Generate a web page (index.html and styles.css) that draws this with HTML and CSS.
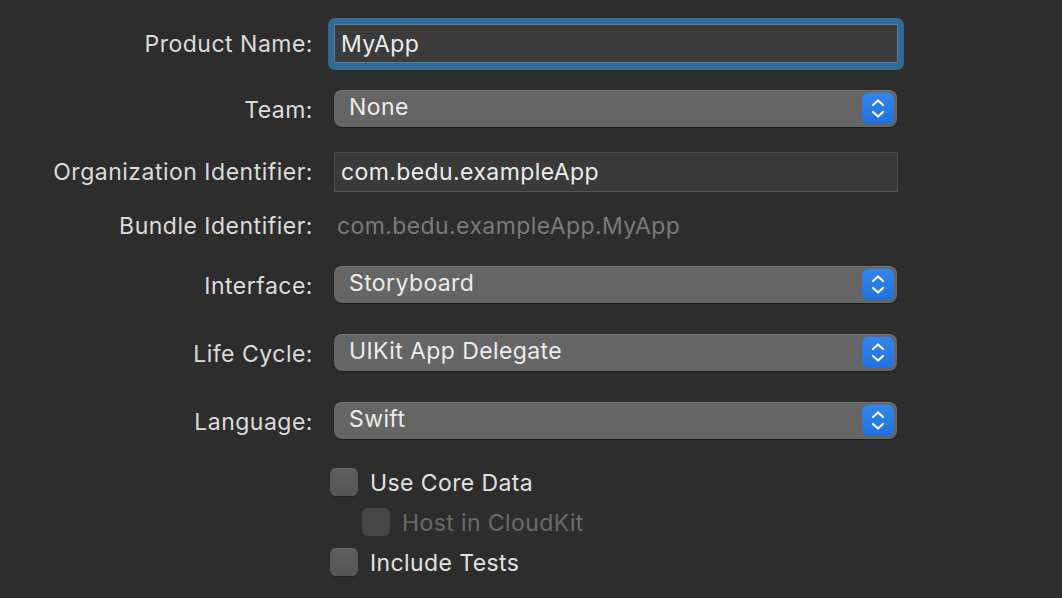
FILE: index.html
```html
<!DOCTYPE html>
<html>
<head>
<meta charset="utf-8">
<link rel="stylesheet" href="styles.css">
</head>
<body>
<div class="form">
  <div class="row r-name">
    <div class="label">Product Name:</div>
    <div class="ctrl"><div class="focus"><div class="field">MyApp</div></div></div>
  </div>
  <div class="row r-team r-pop">
    <div class="label">Team:</div>
    <div class="ctrl"><div class="popup"><span>None</span><span class="stepper"><svg width="32" height="31" viewBox="0 0 32 31"><path d="M11 12 L16 7.5 L21 12 M11 19 L16 23.5 L21 19" fill="none" stroke="#fff" stroke-width="2.2" stroke-linecap="round" stroke-linejoin="round"/></svg></span></div></div>
  </div>
  <div class="row r-org">
    <div class="label">Organization Identifier:</div>
    <div class="ctrl"><div class="field plain">com.bedu.exampleApp</div></div>
  </div>
  <div class="row r-bundle">
    <div class="label">Bundle Identifier:</div>
    <div class="ctrl"><div class="static">com.bedu.exampleApp.MyApp</div></div>
  </div>
  <div class="row r-iface r-pop">
    <div class="label">Interface:</div>
    <div class="ctrl"><div class="popup"><span>Storyboard</span><span class="stepper"><svg width="32" height="31" viewBox="0 0 32 31"><path d="M11 12 L16 7.5 L21 12 M11 19 L16 23.5 L21 19" fill="none" stroke="#fff" stroke-width="2.2" stroke-linecap="round" stroke-linejoin="round"/></svg></span></div></div>
  </div>
  <div class="row r-life r-pop">
    <div class="label">Life Cycle:</div>
    <div class="ctrl"><div class="popup"><span>UIKit App Delegate</span><span class="stepper"><svg width="32" height="31" viewBox="0 0 32 31"><path d="M11 12 L16 7.5 L21 12 M11 19 L16 23.5 L21 19" fill="none" stroke="#fff" stroke-width="2.2" stroke-linecap="round" stroke-linejoin="round"/></svg></span></div></div>
  </div>
  <div class="row r-lang r-pop">
    <div class="label">Language:</div>
    <div class="ctrl"><div class="popup"><span>Swift</span><span class="stepper"><svg width="32" height="31" viewBox="0 0 32 31"><path d="M11 12 L16 7.5 L21 12 M11 19 L16 23.5 L21 19" fill="none" stroke="#fff" stroke-width="2.2" stroke-linecap="round" stroke-linejoin="round"/></svg></span></div></div>
  </div>
  <div class="row r-check r-core">
    <div class="label"></div>
    <div class="ctrl check"><span class="box"></span><span class="ctext">Use Core Data</span></div>
  </div>
  <div class="row r-check">
    <div class="label"></div>
    <div class="ctrl check sub disabled"><span class="box"></span><span class="ctext">Host in CloudKit</span></div>
  </div>
  <div class="row r-check">
    <div class="label"></div>
    <div class="ctrl check"><span class="box"></span><span class="ctext">Include Tests</span></div>
  </div>
</div>
</body>
</html>
```
FILE: styles.css
```css
html, body {
  margin: 0;
  padding: 0;
  background: #2d2d2d;
  width: 1062px;
  height: 598px;
  overflow: hidden;
}
body {
  font-family: Inter, "Noto Sans", sans-serif;
  font-size: 23px;
  letter-spacing: 0.4px;
  color: #dedede;
}
.form {
  display: flex;
  flex-direction: column;
  padding-top: 18px;
}
.row {
  display: flex;
  align-items: center;
  height: 40px;
}
.r-name { height: 52px; }
.r-team { margin-top: 18px; }
.r-org { margin-top: 24px; }
.r-bundle { margin-top: 14px; }
.r-iface { margin-top: 18px; }
.r-life { margin-top: 28px; }
.r-lang { margin-top: 28px; }
.r-core { margin-top: 22px; }
.label {
  width: 313px;
  flex: none;
  text-align: right;
  color: #dcdcdc;
  letter-spacing: 0.5px;
}
.r-pop .label { margin-top: 3px; }
.ctrl {
  margin-left: 21px;
  width: 564px;
  flex: none;
}
.focus {
  margin-left: -6px;
  width: 564px;
  padding: 6px 6px 7px 6px;
  background: #306a96;
  border-radius: 7px;
  box-sizing: content-box;
}
.field {
  height: 39px;
  box-sizing: border-box;
  background: #3b3b3b;
  border: 1px solid #5c7f9a;
  padding-left: 6px;
  display: flex;
  align-items: center;
  color: #ececec;
}
.field.plain {
  height: 40px;
  border: 1px solid #4c4c4c;
  border-bottom-color: #575757;
  background: #3a3a3a;
  padding-left: 6px;
}
.static {
  padding-left: 3px;
  color: #7b7b7b;
}
.popup {
  height: 37px;
  width: 563px;
  box-sizing: border-box;
  background: #656565;
  border-radius: 8px;
  box-shadow: 0 1px 1px rgba(0,0,0,0.35), inset 0 1px 0 rgba(255,255,255,0.12);
  display: flex;
  align-items: center;
  justify-content: space-between;
  padding-left: 15px;
  padding-right: 3px;
  color: #ececec;
}
.popup > span:first-child {
  margin-top: -3px;
}
.stepper {
  width: 32px;
  height: 31px;
  border-radius: 6px;
  background: linear-gradient(#3285ea, #2172df);
  display: flex;
  align-items: center;
  justify-content: center;
}
.stepper svg { display: block; }
.check {
  display: flex;
  align-items: center;
  margin-left: 17px;
}
.box {
  width: 28px;
  height: 28px;
  border-radius: 6px;
  background: linear-gradient(#5e5e5e, #555555);
  box-shadow: inset 0 1px 0 rgba(255,255,255,0.08), 0 1px 1px rgba(0,0,0,0.3);
  flex: none;
}
.ctext {
  margin-left: 12px;
  margin-top: 2px;
  color: #e2e2e2;
}
.check.sub { margin-left: 49px; }
.check.disabled .box {
  background: #464646;
  box-shadow: none;
}
.check.disabled .ctext { color: #6a6a6a; }
```
